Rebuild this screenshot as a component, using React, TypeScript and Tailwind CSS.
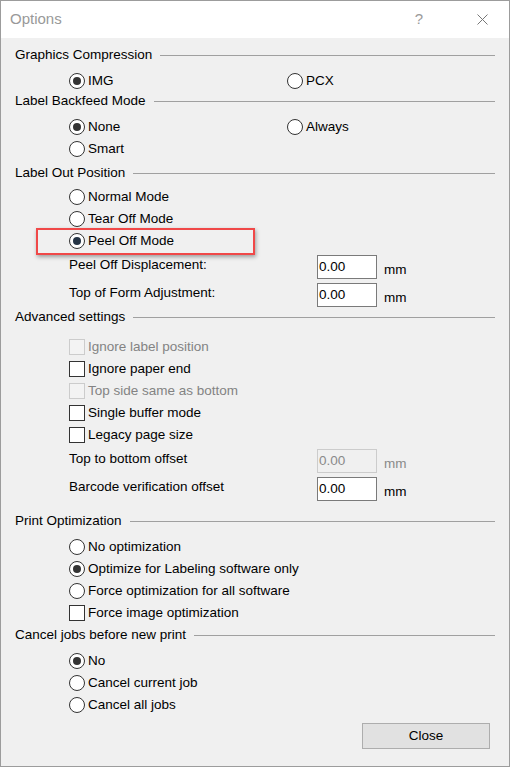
import React from 'react';

const font = { fontFamily: '"Liberation Sans", Arial, sans-serif' };

const Radio: React.FC<{ label: string; checked?: boolean; dot?: string }> = ({ label, checked, dot = 'bg-[#333333]' }) => (
  <div className="flex items-center">
    <span className="flex h-[16px] w-[16px] items-center justify-center rounded-full border border-[#333333] bg-white">
      {checked && <span className={`h-[8px] w-[8px] rounded-full ${dot}`} />}
    </span>
    <span className="ml-[3px] text-[13.5px] text-black">{label}</span>
  </div>
);

const Check: React.FC<{ label: string; disabled?: boolean }> = ({ label, disabled }) => (
  <div className="flex items-center">
    <span
      className={`h-[16px] w-[16px] border ${disabled ? 'border-[#cccccc] bg-[#f3f3f3]' : 'border-[#333333] bg-white'}`}
    />
    <span className={`ml-[3px] text-[13.5px] ${disabled ? 'text-[#838383]' : 'text-black'}`}>{label}</span>
  </div>
);

const Header: React.FC<{ title: string; className?: string }> = ({ title, className = '' }) => (
  <div className={`flex h-[20px] items-center pl-[14px] pr-[14px] ${className}`}>
    <span className="text-[13.5px] text-black">{title}</span>
    <span className="ml-[8px] mt-[1px] h-px flex-1 bg-[#a0a0a0]" />
  </div>
);

const Row: React.FC<{ className?: string; children: React.ReactNode }> = ({ className = '', children }) => (
  <div className={`flex h-[20px] items-center pl-[68px] ${className}`}>{children}</div>
);

const Field: React.FC<{ label: string; disabled?: boolean; className?: string }> = ({ label, disabled, className = '' }) => (
  <div className={`flex h-[24px] items-center pl-[68px] ${className}`}>
    <span className="mb-[4px] w-[248px] text-[13.5px] text-black">{label}</span>
    <span
      className={`flex h-[24px] w-[60px] items-center border pl-[1px] text-[13.5px] ${
        disabled ? 'border-[#cccccc] bg-[#f0f0f0] text-[#8a8a8a]' : 'border-[#7a7a7a] bg-white text-black'
      }`}
    >
      0.00
    </span>
    <span className={`ml-[7px] mt-[6px] text-[13.5px] ${disabled ? 'text-[#8a8a8a]' : 'text-black'}`}>mm</span>
  </div>
);

export default function App() {
  return (
    <div className="h-[767px] w-[510px] overflow-hidden bg-[#f0f0f0]" style={font}>
      <div className="flex h-[767px] w-[510px] flex-col border border-[#9c9c9c]">
        {/* title bar */}
        <div className="flex h-[37px] items-center bg-white">
          <span className="ml-[9px] text-[15px] text-[#999999]">Options</span>
          <span className="ml-auto text-[15px] text-[#9a9a9a]">?</span>
          <svg className="ml-[54px] mr-[21px]" width="11" height="11" viewBox="0 0 11 11">
            <path d="M0.5 0.5 L10.5 10.5 M10.5 0.5 L0.5 10.5" stroke="#777777" strokeWidth="1" fill="none" />
          </svg>
        </div>

        {/* body */}
        <div className="relative flex flex-1 flex-col bg-[#f0f0f0] pt-[7px]">
          <Header title="Graphics Compression" />
          <Row className="mt-[6px]">
            <div className="w-[218px]"><Radio label="IMG" checked /></div>
            <Radio label="PCX" />
          </Row>

          <Header title="Label Backfeed Mode" />
          <Row className="mt-[6px]">
            <div className="w-[218px]"><Radio label="None" checked /></div>
            <Radio label="Always" />
          </Row>
          <Row className="mt-[2px]"><Radio label="Smart" /></Row>

          <Header title="Label Out Position" className="mt-[4px]" />
          <Row className="mt-[4px]"><Radio label="Normal Mode" /></Row>
          <Row className="mt-[2px]"><Radio label="Tear Off Mode" /></Row>
          <Row className="mt-[2px]"><Radio label="Peel Off Mode" checked dot="bg-[#253445]" /></Row>
          <Field label="Peel Off Displacement:" className="mt-[4px]" />
          <Field label="Top of Form Adjustment:" className="mt-[4px]" />

          <Header title="Advanced settings" />
          <Row className="mt-[10px]"><Check label="Ignore label position" disabled /></Row>
          <Row className="mt-[2px]"><Check label="Ignore paper end" /></Row>
          <Row className="mt-[2px]"><Check label="Top side same as bottom" disabled /></Row>
          <Row className="mt-[2px]"><Check label="Single buffer mode" /></Row>
          <Row className="mt-[2px]"><Check label="Legacy page size" /></Row>
          <Field label="Top to bottom offset" disabled className="mt-[4px]" />
          <Field label="Barcode verification offset" className="mt-[4px]" />

          <Header title="Print Optimization" className="mt-[10px]" />
          <Row className="mt-[6px]"><Radio label="No optimization" /></Row>
          <Row className="mt-[2px]"><Radio label="Optimize for Labeling software only" checked /></Row>
          <Row className="mt-[2px]"><Radio label="Force optimization for all software" /></Row>
          <Row className="mt-[2px]"><Check label="Force image optimization" /></Row>

          <Header title="Cancel jobs before new print" className="mt-[2px]" />
          <Row className="mt-[6px]"><Radio label="No" checked /></Row>
          <Row className="mt-[2px]"><Radio label="Cancel current job" /></Row>
          <Row className="mt-[2px]"><Radio label="Cancel all jobs" /></Row>

          <div className="mt-[8px] flex justify-end pr-[19px]">
            <button className="h-[26px] w-[128px] border border-[#adadad] bg-[#e1e1e1] text-[13.5px] text-black">
              Close
            </button>
          </div>

          {/* highlight annotation */}
          <div className="pointer-events-none absolute left-[35px] top-[190px] h-[27px] w-[219px] border-[2px] border-[#f04848] shadow-[1px_2px_4px_rgba(0,0,0,0.35)]" />
        </div>
      </div>
    </div>
  );
}
